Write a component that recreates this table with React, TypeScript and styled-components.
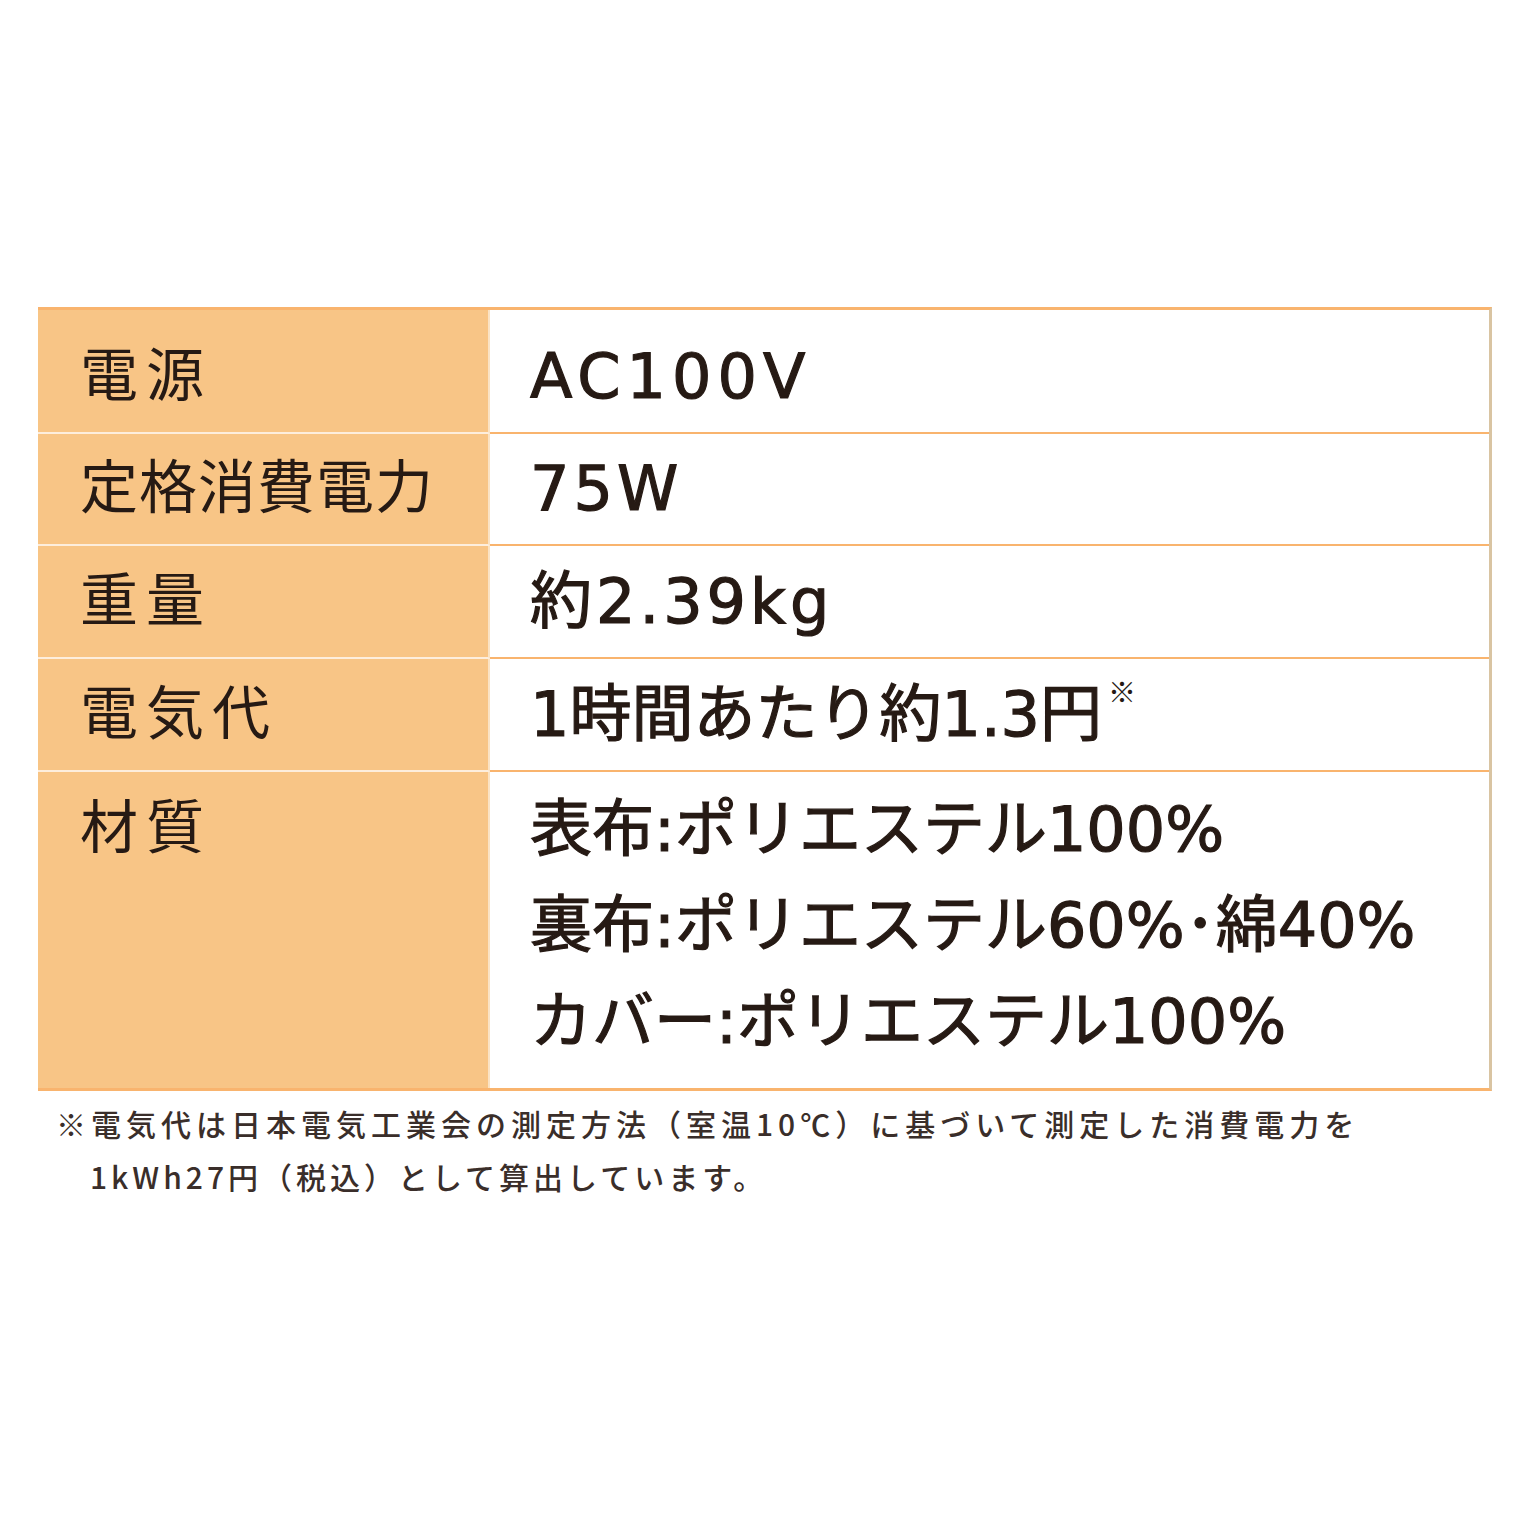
import React from "react";
import styled, { createGlobalStyle } from "styled-components";

const GlobalStyle = createGlobalStyle`
  html, body {
    margin: 0;
    padding: 0;
    background: #ffffff;
  }
  body {
    font-family: "Noto Sans CJK JP", "Noto Sans", sans-serif;
    color: #261a14;
  }
`;

const Page = styled.div`
  width: 1536px;
  height: 1536px;
  box-sizing: border-box;
  padding: 307px 44px 0 38px;
`;

const Table = styled.div`
  display: grid;
  grid-template-columns: 452px 1fr;
  border-top: 3px solid #f9b46e;
  border-bottom: 3px solid #f9b46e;
  border-right: 3px solid #d9c4a2;
`;

const Cell = styled.div<{ $h: number; $top: number; $last?: boolean }>`
  height: ${(p) => p.$h}px;
  box-sizing: border-box;
  display: flex;
  align-items: ${(p) => (p.$last ? "flex-start" : "center")};
  padding-top: ${(p) => p.$top}px;
  line-height: 1;
  white-space: nowrap;
`;

const Label = styled(Cell)<{ $spacing: number }>`
  background: #f8c586;
  border-bottom: ${(p) => (p.$last ? "none" : "2px solid #fdeedd")};
  border-right: 2px solid #fbe3c4;
  padding-left: 42px;
  padding-bottom: ${(p) => (p.$last ? 0 : 12)}px;
  font-size: 58px;
  font-weight: 400;
  letter-spacing: ${(p) => p.$spacing}px;
`;

const Value = styled(Cell)<{ $spacing: number }>`
  background: #ffffff;
  border-bottom: ${(p) => (p.$last ? "none" : "2px solid #f9b46e")};
  padding-left: 40px;
  font-family: "DejaVu Sans", "Noto Sans CJK JP", sans-serif;
  font-size: 62px;
  font-weight: 400;
  -webkit-text-stroke: 1.2px #261a14;
  letter-spacing: ${(p) => p.$spacing}px;
`;

const Lines = styled.div`
  display: flex;
  flex-direction: column;
  gap: 34px;
`;

const Note = styled.span`
  font-family: "Noto Sans CJK JP", sans-serif;
  font-size: 28px;
  -webkit-text-stroke: 0;
  align-self: flex-start;
  margin-top: 18px;
  margin-left: 6px;
`;

const Footnote = styled.div`
  margin-top: 6px;
  padding-left: 18px;
  font-size: 30px;
  line-height: 53px;
  letter-spacing: 5px;
  color: #3a2e2a;
  font-weight: 500;
`;

const Indent = styled.div`
  padding-left: 34px;
  letter-spacing: 4px;
`;

const rows = [
  { label: "電源", spacing: 8, value: "AC100V", vs: 6, h: 124, top: 12 },
  { label: "定格消費電力", spacing: 1, value: "75W", vs: 4, h: 112, top: 0 },
  { label: "重量", spacing: 8, value: "約2.39kg", vs: 4, h: 113, top: 0 },
  { label: "電気代", spacing: 8, value: "1時間あたり約1.3円", vs: 0, note: true, h: 113, top: 0 },
];

export default function App() {
  return (
    <Page>
      <GlobalStyle />
      <Table>
        {rows.map((r) => (
          <React.Fragment key={r.label}>
            <Label $h={r.h} $top={r.top} $spacing={r.spacing}>
              {r.label}
            </Label>
            <Value $h={r.h} $top={r.top} $spacing={r.vs}>
              {r.value}
              {r.note && <Note>※</Note>}
            </Value>
          </React.Fragment>
        ))}
        <Label $h={316} $top={22} $spacing={8} $last>
          材質
        </Label>
        <Value $h={316} $top={27} $spacing={0} $last>
          <Lines>
            <span>表布:ポリエステル100%</span>
            <span>裏布:ポリエステル60%･綿40%</span>
            <span>カバー:ポリエステル100%</span>
          </Lines>
        </Value>
      </Table>
      <Footnote>
        <div>※電気代は日本電気工業会の測定方法（室温10℃）に基づいて測定した消費電力を</div>
        <Indent>1kWh27円（税込）として算出しています。</Indent>
      </Footnote>
    </Page>
  );
}
